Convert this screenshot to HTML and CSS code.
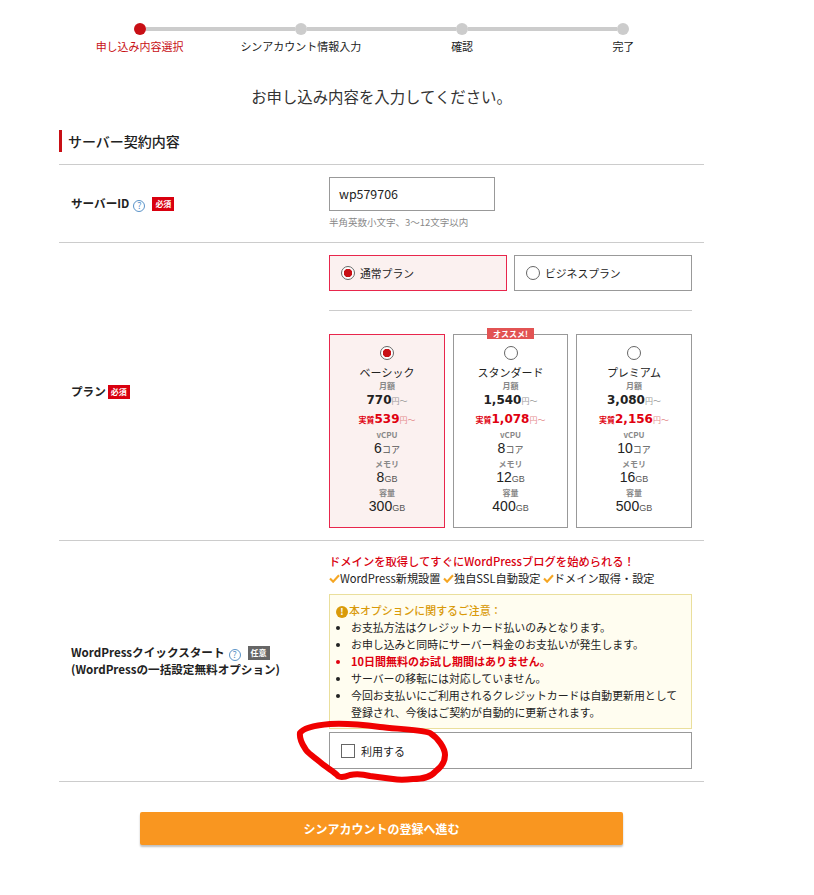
FILE: index.html
```html
<!DOCTYPE html>
<html lang="ja">
<head>
    <meta charset="utf-8">
    <title>お申し込み内容選択</title>
    <link rel="stylesheet" href="styles.css">
</head>
<body>
    <div class="page">
        <div class="track">
            <span class="dot dot-on"></span><span class="bar"></span>
            <span class="dot"></span><span class="bar"></span>
            <span class="dot"></span><span class="bar"></span>
            <span class="dot"></span>
        </div>
        <div class="steps">
            <div class="step step-on">申し込み内容選択</div>
            <div class="step">シンアカウント情報入力</div>
            <div class="step">確認</div>
            <div class="step">完了</div>
        </div>
        <p class="lead">お申し込み内容を入力してください。</p>
        <h2 class="section">サーバー契約内容</h2>

        <div class="row row-id">
            <div class="label">サーバーID<span class="help">?</span><span class="badge">必須</span></div>
            <div class="field">
                <div class="textin">wp579706</div>
                <div class="hint">半角英数小文字、3〜12文字以内</div>
            </div>
        </div>

        <div class="row row-plan">
            <div class="label">プラン<span class="badge">必須</span></div>
            <div class="field">
                <div class="types">
                    <div class="type type-on"><span class="radio radio-on"></span>通常プラン</div>
                    <div class="type"><span class="radio"></span>ビジネスプラン</div>
                </div>
                <div class="cards">
                    <div class="card card-on">
                        <span class="radio radio-on"></span>
                        <div class="name">ベーシック</div>
                        <div class="cap">月額</div>
                        <div class="price"><b>770</b><small>円〜</small></div>
                        <div class="real"><em>実質</em><b>539</b><small>円〜</small></div>
                        <div class="cap">vCPU</div>
                        <div class="spec">6<small>コア</small></div>
                        <div class="cap">メモリ</div>
                        <div class="spec">8<small>GB</small></div>
                        <div class="cap">容量</div>
                        <div class="spec">300<small>GB</small></div>
                    </div>
                    <div class="card">
                        <span class="tag">オススメ!</span>
                        <span class="radio"></span>
                        <div class="name">スタンダード</div>
                        <div class="cap">月額</div>
                        <div class="price"><b>1,540</b><small>円〜</small></div>
                        <div class="real"><em>実質</em><b>1,078</b><small>円〜</small></div>
                        <div class="cap">vCPU</div>
                        <div class="spec">8<small>コア</small></div>
                        <div class="cap">メモリ</div>
                        <div class="spec">12<small>GB</small></div>
                        <div class="cap">容量</div>
                        <div class="spec">400<small>GB</small></div>
                    </div>
                    <div class="card">
                        <span class="radio"></span>
                        <div class="name">プレミアム</div>
                        <div class="cap">月額</div>
                        <div class="price"><b>3,080</b><small>円〜</small></div>
                        <div class="real"><em>実質</em><b>2,156</b><small>円〜</small></div>
                        <div class="cap">vCPU</div>
                        <div class="spec">10<small>コア</small></div>
                        <div class="cap">メモリ</div>
                        <div class="spec">16<small>GB</small></div>
                        <div class="cap">容量</div>
                        <div class="spec">500<small>GB</small></div>
                    </div>
                </div>
            </div>
        </div>

        <div class="row row-wp">
            <div class="label">
                WordPressクイックスタート<span class="help">?</span><span class="badge badge-gray">任意</span><br>
                (WordPressの一括設定無料オプション)
            </div>
            <div class="field">
                <div class="promo">ドメインを取得してすぐにWordPressブログを始められる！</div>
                <div class="checks">
                    <svg class="tick" viewBox="0 0 12 10"><path d="M1 5l3.5 3.5L11 1.5"/></svg>WordPress新規設置
                    <svg class="tick" viewBox="0 0 12 10"><path d="M1 5l3.5 3.5L11 1.5"/></svg>独自SSL自動設定
                    <svg class="tick" viewBox="0 0 12 10"><path d="M1 5l3.5 3.5L11 1.5"/></svg>ドメイン取得・設定
                </div>
                <div class="note">
                    <div class="note-head"><span class="warn">!</span>本オプションに関するご注意：</div>
                    <ul>
                        <li>お支払方法はクレジットカード払いのみとなります。</li>
                        <li>お申し込みと同時にサーバー料金のお支払いが発生します。</li>
                        <li class="alert">10日間無料のお試し期間はありません。</li>
                        <li>サーバーの移転には対応していません。</li>
                        <li>今回お支払いにご利用されるクレジットカードは自動更新用として登録され、今後はご契約が自動的に更新されます。</li>
                    </ul>
                </div>
                <div class="use"><span class="check"></span>利用する</div>
            </div>
        </div>

        <div class="submit">シンアカウントの登録へ進む</div>
    </div>

    <svg class="scribble" width="170" height="80" viewBox="290 715 170 80">
        <path d="M300 733C304 727 318 725 330 724C345 723 365 725 380 727C395 729 418 729 430 733C438 738 445 748 445 755C445 762 440 768 436 771C430 778 422 779 413 779C405 780 398 780 393 779C385 778 378 777 370 776C362 774 355 774 350 775C345 777 341 778 338 776C335 772 327 768 320 762C314 757 309 754 306 750C303 745 299 740 300 733Z"/>
    </svg>
</body>
</html>
```

FILE: styles.css
```css
body {
    margin: 0;
    background: #fff;
    color: #222;
    font-family: "Noto Sans CJK JP", "Noto Sans", sans-serif;
    font-size: 12px;
}
.page {
    width: 645px;
    height: 895px;
    margin-left: 59px;
    box-sizing: border-box;
    padding-top: 23px;
}

.track {
    display: flex;
    align-items: center;
    padding: 0 75px;
}
.dot {
    flex: none;
    width: 12px;
    height: 12px;
    border-radius: 50%;
    background: #ccc;
}
.dot-on {
    background: #c80f15;
}
.bar {
    flex: 1;
    height: 4px;
    background: #ccc;
}
.steps {
    display: grid;
    grid-template-columns: repeat(4, 1fr);
    margin-top: 2px;
}
.step {
    text-align: center;
    font-size: 11px;
    line-height: 18px;
    white-space: nowrap;
}
.step-on {
    color: #c80f15;
}

.lead {
    margin: 29px 0 0;
    text-align: center;
    font-size: 15.4px;
    line-height: 24px;
    color: #333;
}
.section {
    margin: 22px 0 0;
    padding-left: 6px;
    border-left: 3px solid #c80f15;
    font-size: 14px;
    font-weight: 500;
    line-height: 22px;
}

.row {
    display: flex;
    align-items: center;
    border-bottom: 1px solid #ccc;
}
.row-id {
    height: 77px;
    margin-top: 12px;
    border-top: 1px solid #ccc;
}
.row-id .field {
    padding-bottom: 2px;
}
.row-plan {
    height: 297px;
}
.row-wp {
    height: 240px;
}
.label {
    flex: none;
    width: 258px;
    padding-left: 12px;
    font-size: 11.6px;
    font-weight: 700;
    line-height: 17px;
}
.field {
    width: 363px;
}

.help {
    display: inline-block;
    width: 10px;
    height: 10px;
    margin-left: 4px;
    border: 1px solid #5a93c8;
    border-radius: 50%;
    color: #5a93c8;
    font-size: 9px;
    font-weight: 400;
    line-height: 10px;
    text-align: center;
    vertical-align: -1px;
}
.badge {
    display: inline-block;
    width: 22px;
    margin-left: 2px;
    background: #d9000f;
    color: #fff;
    font-size: 8px;
    font-weight: 700;
    line-height: 14px;
    text-align: center;
    vertical-align: 1px;
}
.help + .badge {
    margin-left: 7px;
}
.badge-gray {
    background: #666;
}

.textin {
    box-sizing: border-box;
    width: 166px;
    height: 34px;
    padding-left: 9px;
    border: 1px solid #999;
    font-size: 12.4px;
    line-height: 32px;
}
.hint {
    margin-top: 5px;
    color: #888;
    font-size: 9.5px;
    line-height: 13px;
}

.radio {
    display: inline-block;
    flex: none;
    box-sizing: border-box;
    width: 14px;
    height: 14px;
    border: 1px solid #666;
    border-radius: 50%;
    background: #fff;
}
.radio-on {
    background: radial-gradient(circle, #c80f15 0 4px, #fff 4.5px);
}

.types {
    display: flex;
    gap: 7px;
    padding-bottom: 19px;
    border-bottom: 1px solid #ccc;
}
.type {
    display: flex;
    align-items: center;
    gap: 5px;
    box-sizing: border-box;
    width: 178px;
    height: 36px;
    padding-left: 11px;
    border: 1px solid #999;
    font-size: 10.8px;
}
.type-on {
    border-color: #e8264c;
    background: #fbf1f0;
}

.cards {
    display: grid;
    grid-template-columns: 116px 115px 116px;
    gap: 8px;
    margin-top: 23px;
}
.card {
    position: relative;
    box-sizing: border-box;
    height: 194px;
    padding-top: 11px;
    border: 1px solid #999;
    text-align: center;
}
.card-on {
    border-color: #e8264c;
    background: #fbf1f0;
}
.card .radio {
    display: block;
    margin: 0 auto;
}
.tag {
    position: absolute;
    top: -7px;
    left: 33px;
    width: 47px;
    background: #e25353;
    color: #fff;
    font-size: 8px;
    font-weight: 700;
    line-height: 11px;
}
.name {
    margin-top: 4px;
    font-size: 11px;
    line-height: 16px;
}
.cap {
    height: 11px;
    color: #888;
    font-size: 8px;
    font-weight: 700;
    line-height: 11px;
}
.price,
.real {
    height: 17px;
    font-family: "DejaVu Sans", sans-serif;
    font-size: 12px;
    line-height: 17px;
}
.price {
    margin: 1px 0 2px;
}
.real {
    margin-bottom: 1px;
    color: #e0000f;
}
.price small,
.real small {
    color: #999;
    font-family: "Noto Sans CJK JP", sans-serif;
    font-size: 8px;
}
.real small {
    color: #e58a8a;
}
.real em {
    font-family: "Noto Sans CJK JP", sans-serif;
    font-size: 8px;
    font-style: normal;
    font-weight: 700;
}
.spec {
    height: 16px;
    margin-bottom: 2px;
    font-family: "Liberation Sans", "Noto Sans CJK JP", sans-serif;
    font-size: 14px;
    line-height: 16px;
}
.spec small {
    color: #555;
    font-size: 9px;
}

.promo {
    color: #d9000f;
    font-size: 11.3px;
    font-weight: 500;
    line-height: 17px;
}
.checks {
    font-size: 11.2px;
    line-height: 17px;
    white-space: nowrap;
}
.tick {
    width: 11px;
    height: 9px;
    fill: none;
    stroke: #f5a623;
    stroke-width: 2.4;
}
.note {
    box-sizing: border-box;
    height: 135px;
    margin-top: 7px;
    padding: 7px 6px 0;
    border: 1px solid #eadf9c;
    background: #fffdf0;
    font-size: 10.9px;
    line-height: 17px;
}
.note-head {
    color: #d99a0a;
    font-weight: 500;
}
.warn {
    display: inline-block;
    width: 12px;
    height: 12px;
    margin-right: 1px;
    border-radius: 50%;
    background: #d99a0a;
    color: #fff;
    font-size: 9px;
    font-weight: 700;
    line-height: 12px;
    text-align: center;
}
.note ul {
    margin: 0;
    padding-left: 15px;
}
.alert {
    color: #e0000f;
    font-size: 11px;
    font-weight: 700;
}
.use {
    display: flex;
    align-items: center;
    gap: 6px;
    box-sizing: border-box;
    height: 37px;
    margin-top: 3px;
    padding-left: 11px;
    border: 1px solid #999;
    font-size: 11px;
}
.check {
    box-sizing: border-box;
    width: 14px;
    height: 14px;
    border: 1px solid #666;
}

.submit {
    width: 483px;
    height: 33px;
    margin: 30px 0 0 81px;
    border-radius: 2px;
    background: #f99620;
    box-shadow: 0 2px 2px rgba(0, 0, 0, 0.25);
    color: #fff;
    font-size: 12px;
    font-weight: 700;
    line-height: 33px;
    text-align: center;
}

.scribble {
    position: absolute;
    left: 290px;
    top: 715px;
    fill: none;
    stroke: #f00000;
    stroke-width: 6;
    stroke-linejoin: round;
}
```
